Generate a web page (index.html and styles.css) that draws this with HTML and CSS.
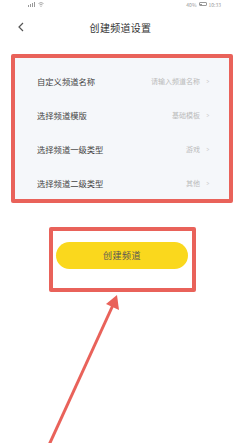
FILE: index.html
```html
<!DOCTYPE html>
<html lang="zh">
<head>
<meta charset="utf-8">
<link rel="stylesheet" href="styles.css">
</head>
<body>
<div class="screen">
  <div class="status">
    <div class="status-left">
      <svg width="7" height="5" viewBox="0 0 7 5"><rect x="0" y="3" width="1" height="2" fill="#999"/><rect x="2" y="2" width="1" height="3" fill="#999"/><rect x="4" y="1" width="1" height="4" fill="#999"/><rect x="6" y="0" width="1" height="5" fill="#999"/></svg>
      <svg width="6" height="5" viewBox="0 0 6 5"><path d="M0.5 1.5 Q3 -0.5 5.5 1.5 M1.5 2.8 Q3 1.6 4.5 2.8" stroke="#999" stroke-width="0.8" fill="none"/><circle cx="3" cy="4.2" r="0.6" fill="#999"/></svg>
    </div>
    <div class="status-right">
      <span>40%</span>
      <span class="battery"><span class="battery-fill"></span></span>
      <span>10:33</span>
    </div>
  </div>
  <div class="header">
    <svg class="back" width="6" height="10" viewBox="0 0 6 10"><path d="M5 1 L1 5 L5 9" stroke="#555" stroke-width="1.2" fill="none"/></svg>
    <div class="title">创建频道设置</div>
  </div>
  <div class="mark">
    <div class="card">
      <div class="row"><span class="label">自定义频道名称</span><span class="value">请输入频道名称<span class="chev">&gt;</span></span></div>
      <div class="row"><span class="label">选择频道模版</span><span class="value">基础模板<span class="chev">&gt;</span></span></div>
      <div class="row"><span class="label">选择频道一级类型</span><span class="value">游戏<span class="chev">&gt;</span></span></div>
      <div class="row"><span class="label">选择频道二级类型</span><span class="value">其他<span class="chev">&gt;</span></span></div>
    </div>
  </div>
  <div class="btn-mark">
    <div class="btn">创建频道</div>
  </div>
  <svg class="arrow" width="241" height="443" viewBox="0 0 241 443">
    <line x1="49" y1="445" x2="113" y2="305" stroke="#e9625a" stroke-width="3"/>
    <polygon points="117,295 119,310 106,304" fill="#e9625a"/>
  </svg>
</div>
</body>
</html>
```
FILE: styles.css
```css
* { box-sizing: border-box; }
html, body { margin: 0; padding: 0; background: #fff; }
body { font-family: "Noto Sans CJK SC", "Noto Sans", sans-serif; }
.screen { position: relative; width: 241px; height: 443px; overflow: hidden; background: #fff; }
.status { height: 8px; display: flex; justify-content: space-between; align-items: center; padding: 0 20px 0 28px; font-size: 5px; color: #999; line-height: 1; }
.status-left { display: flex; gap: 3px; align-items: center; }
.status-right { display: flex; gap: 2px; align-items: center; }
.battery { display: inline-block; width: 8px; height: 4px; border: 0.6px solid #999; border-radius: 1px; padding: 0.5px; }
.battery-fill { display: block; width: 40%; height: 100%; background: #999; }
.header { position: relative; height: 38px; display: flex; align-items: center; justify-content: center; }
.back { position: absolute; left: 18px; top: 14px; }
.title { font-size: 10px; color: #333; letter-spacing: 0.3px; }
.mark { margin: 8px 8px 0 11px; border: 4px solid #e9625a; border-radius: 2px; height: 149px; background: #fff; }
.card { background: #f5f7fa; height: 100%; padding: 6px 19px 0 22px; }
.row { height: 34px; display: flex; align-items: center; justify-content: space-between; }
.label { font-size: 8.3px; color: #444; }
.value { font-size: 7px; color: #bbb; display: flex; align-items: center; }
.chev { margin-left: 6px; font-size: 7px; color: #ccc; transform: scaleX(0.7); }
.btn-mark { margin: 24px 0 0 49px; width: 147px; height: 65px; border: 4px solid #e9625a; border-radius: 2px; padding: 11px 4px 0 3px; }
.btn { height: 27px; border-radius: 14px; background: #fad81d; display: flex; align-items: center; justify-content: center; font-size: 9px; color: #555; letter-spacing: 0.5px; }
.arrow { position: absolute; left: 0; top: 0; pointer-events: none; }
```
